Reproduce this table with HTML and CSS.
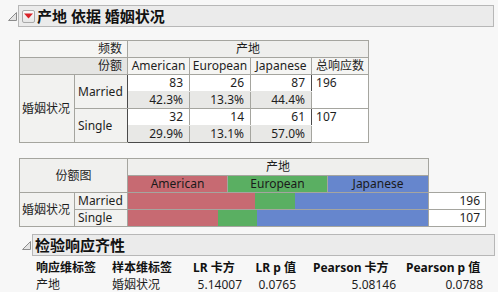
FILE: index.html
```html
<!DOCTYPE html>
<html lang="zh">
<head>
<meta charset="utf-8">
<link rel="stylesheet" href="styles.css">
</head>
<body>
<div class="report">
  <div class="outline">
    <svg class="disc" width="9" height="9" viewBox="0 0 9 9"><path d="M8.5 0.5 V8.5 H0.5 Z" fill="#e4e4e4" stroke="#8c8c8c"/></svg>
    <div class="title-box">
      <span class="menu-btn"><svg width="9" height="6" viewBox="0 0 9 6"><path d="M0 0.5 H9 L4.5 5.5 Z" fill="#d8232a"/></svg></span>
      <h1 class="title">产地 依据 婚姻状况</h1>
    </div>
  </div>

  <div class="body">
    <table class="ct">
      <colgroup><col class="w55"><col class="w53"><col class="w62"><col class="w61"><col class="w61"><col class="w57"></colgroup>
      <tr><th colspan="2" class="corner top">频数</th><th colspan="4" class="grp">产地</th></tr>
      <tr><th colspan="2" class="corner sub">份额</th><th class="lvl">American</th><th class="lvl">European</th><th class="lvl">Japanese</th><th class="lvl">总响应数</th></tr>
      <tr><th rowspan="4" class="rvar">婚姻状况</th><th rowspan="2" class="rlvl">Married</th><td class="n">83</td><td class="n">26</td><td class="n last">87</td><td rowspan="2" class="tot">196</td></tr>
      <tr><td class="p">42.3%</td><td class="p">13.3%</td><td class="p last">44.4%</td></tr>
      <tr><th rowspan="2" class="rlvl">Single</th><td class="n">32</td><td class="n">14</td><td class="n last">61</td><td rowspan="2" class="tot">107</td></tr>
      <tr><td class="p bottom">29.9%</td><td class="p bottom">13.1%</td><td class="p last bottom">57.0%</td></tr>
    </table>

    <table class="mt">
      <colgroup><col class="w55"><col class="w53"><col class="w100"><col class="w100"><col class="w101"><col class="w57"></colgroup>
      <tr><th colspan="2" rowspan="2" class="corner2">份额图</th><th colspan="3" class="grp">产地</th><td class="blank"></td></tr>
      <tr><th class="sw red">American</th><th class="sw green">European</th><th class="sw blue">Japanese</th><td class="blank"></td></tr>
      <tr><th rowspan="2" class="rvar">婚姻状况</th><th class="rlvl2">Married</th>
        <td colspan="3" class="bar"><div class="bars"><span class="red" style="width:42.3%"></span><span class="green" style="width:13.3%"></span><span class="blue" style="width:44.4%"></span></div></td>
        <td class="cnt">196</td></tr>
      <tr><th class="rlvl2">Single</th>
        <td colspan="3" class="bar"><div class="bars"><span class="red" style="width:29.9%"></span><span class="green" style="width:13.1%"></span><span class="blue" style="width:57.0%"></span></div></td>
        <td class="cnt">107</td></tr>
    </table>
  </div>

  <div class="outline sec2">
    <svg class="disc" width="9" height="9" viewBox="0 0 9 9"><path d="M8.5 0.5 V8.5 H0.5 Z" fill="#e4e4e4" stroke="#8c8c8c"/></svg>
    <div class="title-box box2">
      <h2 class="title">检验响应齐性</h2>
    </div>
  </div>

  <div class="stats">
    <div class="h l c1">响应维标签</div>
    <div class="h l c2">样本维标签</div>
    <div class="h l c3">LR 卡方</div>
    <div class="h r c4">LR p 值</div>
    <div class="h l c5">Pearson 卡方</div>
    <div class="h l c6">Pearson p 值</div>
    <div class="v l c1">产地</div>
    <div class="v l c2">婚姻状况</div>
    <div class="v r c3">5.14007</div>
    <div class="v r c4">0.0765</div>
    <div class="v r c5">5.08146</div>
    <div class="v r c6">0.0788</div>
  </div>
</div>
</body>
</html>
```

FILE: styles.css
```css
html, body {
  margin: 0;
  padding: 0;
  background: #f7f7f7;
}
body {
  font-family: "Noto Sans", "Noto Sans CJK SC", sans-serif;
  font-size: 12px;
  color: #1e1e1e;
}
.report {
  width: 498px;
}
.outline {
  display: flex;
  align-items: center;
  padding: 5px 4px 0 8px;
}
.disc {
  flex: none;
  margin-right: 1px;
  margin-top: 1px;
}
.title-box {
  flex: 1;
  display: flex;
  align-items: center;
  height: 20px;
  background: #ebebeb;
  border: 1px solid #b7b7b7;
}
.menu-btn {
  width: 11px;
  height: 11px;
  margin-left: 3px;
  border: 1px solid #a9a9a9;
  border-radius: 2px;
  background: linear-gradient(#fbfbfb, #e6e6e6);
  display: flex;
  align-items: center;
  justify-content: center;
}
.menu-btn svg { display: block; }
.title {
  margin: 0 0 0 2px;
  font-size: 15px;
  font-weight: bold;
  line-height: 20px;
  color: #111;
  white-space: pre;
}
.body {
  padding: 13px 0 0 19px;
}
table {
  border-collapse: collapse;
  table-layout: fixed;
  font-size: 12px;
}
th, td {
  border: 1px solid #a5a59f;
  padding: 0;
  height: 16px;
  line-height: 16px;
  font-weight: normal;
  white-space: nowrap;
  overflow: hidden;
}
.w55 { width: 55px; }
.w53 { width: 53px; }
.w62 { width: 62px; }
.w61 { width: 61px; }
.w57 { width: 57px; }
.w100 { width: 100px; }
.w101 { width: 101px; }
.ct { width: 350px; }
.corner { text-align: right; padding-right: 5px; }
.corner.top { background: #f5f5f3; }
.corner.sub { background: #e5e5e3; }
.grp { background: #efefed; text-align: center; }
.lvl { background: #f5f5f3; text-align: center; }
.rvar { background: #f2f2f0; text-align: left; padding-left: 2px; }
.rlvl { background: #f2f2f0; text-align: left; padding-left: 3px; border-right: 1px solid #4a4a4a; }
.n, .p { text-align: right; padding-right: 6px; }
.n { background: #ffffff; border-bottom: 1px solid #e8e8e6; }
.p { background: #e8e8e6; }
.last { border-right: 1px solid #4a4a4a; }
.bottom { border-bottom: 1px solid #4a4a4a; }
.tot { background: #ffffff; text-align: left; vertical-align: top; padding-left: 4px; }

.mt { width: 466px; margin-top: 15px; }
.corner2 { background: #f0f0ee; text-align: center; }
.blank { border: none; background: transparent; }
.sw { text-align: center; color: #1a1a1a; }
.red { background: #c76a72; }
.green { background: #5aaf62; }
.blue { background: #6686cd; }
.rlvl2 { background: #f2f2f0; text-align: left; padding-left: 3px; }
.bar { padding: 0; }
.bars { display: flex; height: 16px; }
.bars span { display: block; height: 16px; }
.cnt { background: #ffffff; text-align: right; padding-right: 5px; }

.sec2 { padding: 7px 3px 0 22px; }
.box2 { padding-left: 2px; }
.box2 .title { margin-left: 0; }

.stats {
  display: grid;
  grid-template-columns: 76px 78px 60px 60px 92px 84px;
  grid-auto-rows: 17px;
  padding: 3px 0 0 36px;
  line-height: 17px;
  white-space: nowrap;
}
.h { font-weight: bold; color: #111; }
.l { text-align: left; }
.r { text-align: right; }
.h.c3 { padding-left: 3px; }
.h.c4 { padding-right: 14px; }
.h.c5 { padding-left: 3px; }
.h.c6 { padding-left: 4px; }
.v.c3 { padding-right: 8px; }
.v.c4 { padding-right: 14px; }
.v.c5 { padding-right: 6px; }
.v.c6 { padding-right: 3px; }
```
